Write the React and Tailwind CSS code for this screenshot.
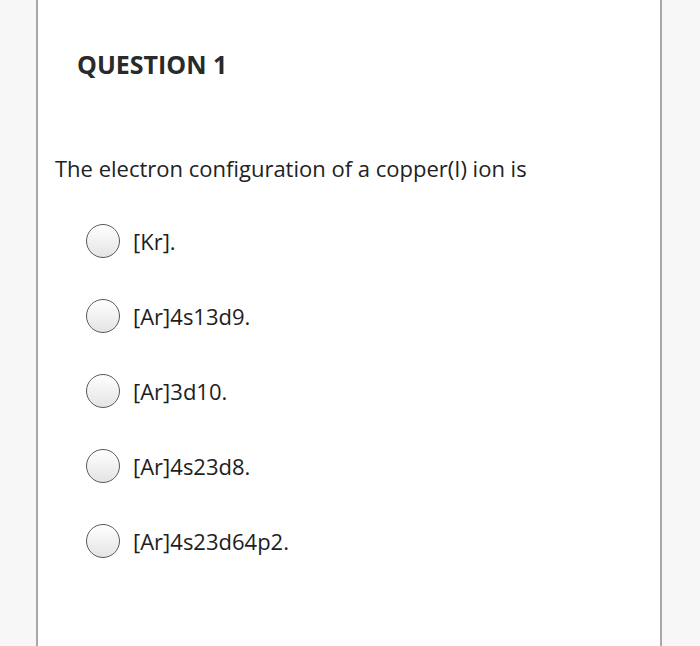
export default function App() {
  const options = ["[Kr].", "[Ar]4s13d9.", "[Ar]3d10.", "[Ar]4s23d8.", "[Ar]4s23d64p2."];
  return (
    <div className="w-[700px] h-[646px] overflow-hidden bg-[#f7f7f7] flex" style={{ fontFamily: '"Open Sans", sans-serif' }}>
      <div className="ml-[36px] w-[626px] h-full bg-white border-l-2 border-r-2 border-[#a8a8a8] flex flex-col">
        <div className="ml-[39px] mt-[46px] text-[25px] leading-[36px] font-bold text-[#2a2a2a]">QUESTION 1</div>
        <div className="ml-[17px] mt-[70px] text-[22px] leading-[32px] text-[#222]">The electron configuration of a copper(I) ion is</div>
        <div className="flex flex-col mt-[40px] gap-[41px]">
          {options.map((o) => (
            <div key={o} className="flex items-center h-[34px] ml-[48px]">
              <div className="w-[34px] h-[34px] rounded-full border-[1.5px] border-[#5a5a5a] bg-gradient-to-b from-white to-[#e4e4e4] shrink-0" />
              <span className="ml-[13px] text-[22px] text-[#1e1e1e]">{o}</span>
            </div>
          ))}
        </div>
      </div>
    </div>
  );
}
